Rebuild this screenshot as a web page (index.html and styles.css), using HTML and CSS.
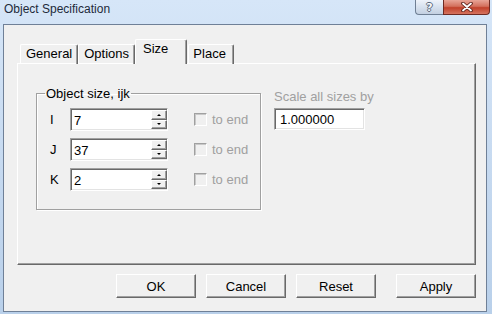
FILE: index.html
```html
<!DOCTYPE html>
<html>
<head>
  <link rel="stylesheet" href="styles.css">
  <title>Object Specification</title>
</head>
<body>

  <div class="window">
    <div class="titlebar">
      <span class="title">Object Specification</span>
      <div class="caption-btns">
        <span class="cap help">?</span>
        <span class="cap close">
          <svg width="14" height="10" viewBox="0 0 14 10">
            <path d="M3 1.5 L11 8.5 M11 1.5 L3 8.5" stroke="#5a2018" stroke-width="3.6" stroke-linecap="round"/>
            <path d="M3 1.5 L11 8.5 M11 1.5 L3 8.5" stroke="#ffffff" stroke-width="1.8" stroke-linecap="round"/>
          </svg>
        </span>
      </div>
    </div>

    <div class="client">
      <div class="tabs">
        <span class="tab">General</span>
        <span class="tab">Options</span>
        <span class="tab active">Size</span>
        <span class="tab place">Place</span>
      </div>

      <div class="panel">
        <fieldset class="group">
          <legend>Object size, ijk</legend>

          <div class="row">
            <span class="axis">I</span>
            <div class="spinbox">
              <input class="spin-value" type="text" value="7">
              <div class="spin">
                <span class="spin-btn"><i class="arrow-up"></i></span>
                <span class="spin-btn"><i class="arrow-down"></i></span>
              </div>
            </div>
            <span class="check"></span>
            <span class="check-label">to end</span>
          </div>

          <div class="row">
            <span class="axis">J</span>
            <div class="spinbox">
              <input class="spin-value" type="text" value="37">
              <div class="spin">
                <span class="spin-btn"><i class="arrow-up"></i></span>
                <span class="spin-btn"><i class="arrow-down"></i></span>
              </div>
            </div>
            <span class="check"></span>
            <span class="check-label">to end</span>
          </div>

          <div class="row">
            <span class="axis">K</span>
            <div class="spinbox">
              <input class="spin-value" type="text" value="2">
              <div class="spin">
                <span class="spin-btn"><i class="arrow-up"></i></span>
                <span class="spin-btn"><i class="arrow-down"></i></span>
              </div>
            </div>
            <span class="check"></span>
            <span class="check-label">to end</span>
          </div>
        </fieldset>

        <div class="scale">
          <div class="scale-label">Scale all sizes by</div>
          <input class="scale-value" type="text" value="1.000000">
        </div>
      </div>

      <div class="buttons">
        <button>OK</button>
        <button>Cancel</button>
        <button>Reset</button>
        <button class="apply">Apply</button>
      </div>
    </div>
  </div>

</body>
</html>
```

FILE: styles.css
```css
body {
  margin: 0;
  font-family: 'Liberation Sans', Arial, sans-serif;
  font-size: 13px;
  line-height: 15px;
  color: #000;
}

.window {
  width: 492px;
  height: 314px;
  box-sizing: border-box;
  padding: 0 5px 2px 3px;
  background: linear-gradient(to bottom, #d6e6f8, #c4d8ef 60%, #b9d0ea);
  display: flex;
  flex-direction: column;
}

/* title bar */
.titlebar {
  height: 24px;
  display: flex;
  align-items: flex-start;
}

.title {
  font-size: 12px;
  line-height: 14px;
  padding: 2px 0 0 1px;
  color: #1e2a3a;
}

.caption-btns {
  margin-left: auto;
  margin-right: -3px;
  display: flex;
}

.cap {
  height: 15px;
  box-sizing: border-box;
  display: flex;
  align-items: center;
  justify-content: center;
  border: 1px solid #6f7f94;
  border-top: none;
}

.help {
  width: 28px;
  border-right: none;
  border-bottom-left-radius: 4px;
  background: linear-gradient(to bottom, #eef3fa, #d7e1ee 50%, #c3d0e1);
  font-family: 'DejaVu Sans', sans-serif;
  font-weight: bold;
  font-size: 11px;
  color: #f4f6f9;
  text-shadow: 1px 0 #5c6a7d, -1px 0 #5c6a7d, 0 1px #5c6a7d, 0 -1px #5c6a7d;
}

.close {
  width: 47px;
  border-color: #6e2a22;
  border-bottom-right-radius: 4px;
  background: linear-gradient(to bottom, #e8a597, #d3705d 45%, #c1412b 55%, #d5735f);
}

/* client area */
.client {
  flex: 1;
  background: #f0f0f0;
  border: 1px solid #6f8097;
  padding: 14px 0 0 13px;
}

.tabs {
  display: flex;
  align-items: flex-end;
  padding-left: 3px;
  margin-bottom: -1px;
}

.tab {
  height: 20px;
  box-sizing: border-box;
  padding: 1px 5px 0 5px;
  border-top: 1px solid #fff;
  border-left: 1px solid #fff;
  border-right: 1px solid #696969;
  box-shadow: inset -1px 0 0 #a0a0a0;
  border-top-left-radius: 2px;
  border-top-right-radius: 2px;
}

.tab.active {
  height: 25px;
  padding: 1px 18px 0 7px;
  background: #f0f0f0;
  position: relative;
  z-index: 1;
}

.tab.place {
  margin-left: 1px;
  padding: 1px 7px 0 4px;
}

.panel {
  width: 459px;
  height: 202px;
  box-sizing: border-box;
  border: 1px solid #fff;
  border-right-color: #696969;
  border-bottom-color: #696969;
  box-shadow: inset -1px -1px 0 #a0a0a0;
  padding: 22px 0 0 18px;
  display: flex;
  align-items: flex-start;
}

/* group box */
.group {
  width: 225px;
  box-sizing: border-box;
  margin: 0;
  padding: 0 0 18px 13px;
  border: 1px solid #a0a0a0;
  box-shadow: 1px 1px 0 #fff, inset 1px 1px 0 #fff;
}

.group legend {
  margin-left: -5px;
  padding: 0 1px;
  line-height: 15px;
}

.row {
  display: flex;
  align-items: center;
  height: 23px;
  margin-top: 7px;
}

.axis {
  width: 20px;
}

.spinbox {
  width: 98px;
  height: 23px;
  box-sizing: border-box;
  display: flex;
  background: #fff;
  border: 1px solid;
  border-color: #a0a0a0 #fff #fff #a0a0a0;
  box-shadow: inset 1px 1px 0 #696969, inset -1px -1px 0 #e3e3e3;
}

.spin-value {
  flex: 1;
  min-width: 0;
  border: none;
  background: transparent;
  font: inherit;
  color: #000;
  padding: 2px 0 0 3px;
  outline: none;
}

.spin {
  width: 16px;
  display: flex;
  flex-direction: column;
  padding: 1px 0 1px 0;
}

.spin-btn {
  flex: 1;
  display: flex;
  align-items: center;
  justify-content: center;
  background: #f0f0f0;
  border: 1px solid;
  border-color: #fff #696969 #696969 #fff;
  box-shadow: inset -1px -1px 0 #a0a0a0;
}

.arrow-up,
.arrow-down {
  width: 0;
  height: 0;
  border-left: 2px solid transparent;
  border-right: 2px solid transparent;
}

.arrow-up {
  border-bottom: 2px solid #000;
}

.arrow-down {
  border-top: 2px solid #000;
}

.check {
  width: 13px;
  height: 13px;
  box-sizing: border-box;
  margin-left: 26px;
  border: 1px solid;
  border-color: #a0a0a0 #fff #fff #a0a0a0;
  box-shadow: inset 1px 1px 0 #c8c8c8;
  background: #f0f0f0;
}

.check-label {
  margin-left: 5px;
  color: #a0a0a0;
}

/* scale column */
.scale {
  margin: 3px 0 0 13px;
}

.scale-label {
  color: #a0a0a0;
}

.scale-value {
  display: block;
  margin-top: 4px;
  width: 91px;
  height: 22px;
  box-sizing: border-box;
  border: 1px solid;
  border-color: #a0a0a0 #fff #fff #a0a0a0;
  box-shadow: inset 1px 1px 0 #696969, inset -1px -1px 0 #e3e3e3;
  font: inherit;
  color: #000;
  padding: 1px 0 0 5px;
  outline: none;
}

/* dialog buttons */
.buttons {
  width: 459px;
  display: flex;
  justify-content: flex-end;
  gap: 10px;
  margin-top: 9px;
}

button {
  width: 80px;
  height: 24px;
  box-sizing: border-box;
  font: inherit;
  color: #000;
  background: #f0f0f0;
  border: 1px solid;
  border-color: #fff #696969 #696969 #fff;
  box-shadow: inset -1px -1px 0 #a0a0a0;
  padding: 0;
}

.apply {
  margin-left: 10px;
}
```
